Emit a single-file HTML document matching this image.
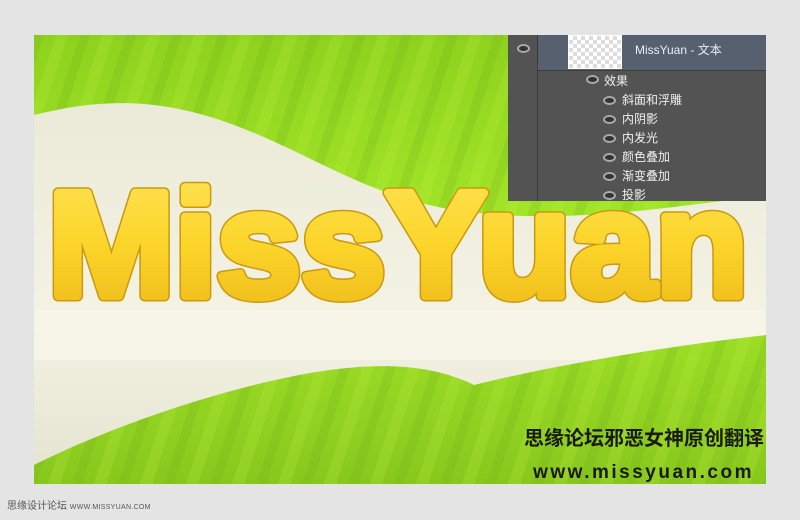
<!DOCTYPE html>
<html><head><meta charset="utf-8"><style>
html,body{margin:0;padding:0;width:800px;height:520px;background:#e5e4e4;overflow:hidden;font-family:"Liberation Sans","Noto Sans CJK SC",sans-serif}
.pic{position:absolute;left:34px;top:35px;width:732px;height:449px;overflow:hidden}
.panel{position:absolute;left:508px;top:35px;width:258px;height:166px;background:#535353;color:#f0f0f0;font-size:12px}
.panel .lc{position:absolute;left:29px;top:0;width:1px;height:166px;background:#3a3a3a}
.sel{position:absolute;left:30px;top:0;width:228px;height:35px;background:#56606e;border-bottom:1px solid #3e3e3e}
.thumb{position:absolute;left:60px;top:0;width:52px;height:32px;background:repeating-conic-gradient(#ddd 0 25%,#fff 0 50%) 0 0/8px 8px;border:1px solid #fff}
.eye{position:absolute;width:9px;height:5px;border-radius:50%;background:#333;border:2px solid #aaa}
.row{position:absolute;font-size:12px}
.foot{position:absolute;left:7px;top:497px;font-size:10px;color:#555}
.foot small{font-size:7px;letter-spacing:.3px}
</style></head><body>
<div class="pic">
<svg width="732" height="449" viewBox="0 0 732 449">
<defs>
<linearGradient id="g" x1="0" y1="0" x2="0" y2="1"><stop offset="0" stop-color="#8ed21e"/><stop offset=".5" stop-color="#a6e82a"/><stop offset="1" stop-color="#88c81e"/></linearGradient>
<pattern id="st" width="46" height="449" patternUnits="userSpaceOnUse" patternTransform="skewX(-18)"><rect x="0" width="10" height="449" fill="#6aa815" opacity=".18"/><rect x="22" width="12" height="449" fill="#c5f545" opacity=".18"/></pattern>
<linearGradient id="c" x1="0" y1="0" x2="0" y2="1"><stop offset="0" stop-color="#ebead8"/><stop offset=".6" stop-color="#f4f3e4"/><stop offset="1" stop-color="#e6e5d2"/></linearGradient>
<linearGradient id="y" x1="0" y1="0" x2="0" y2="1"><stop offset="0" stop-color="#ffe45a"/><stop offset=".5" stop-color="#fcd52a"/><stop offset="1" stop-color="#ecb718"/></linearGradient>
<clipPath id="cp"><path d="M0 80 C60 65,120 60,200 90 C280 120,330 160,420 175 C520 190,620 175,732 160 L732 300 C640 310,520 330,440 350 C380 320,300 330,220 350 C140 370,60 400,0 430 Z"/></clipPath>
</defs>
<rect width="732" height="449" fill="url(#g)"/>
<rect width="732" height="449" fill="url(#st)"/>
<path d="M0 80 C60 65,120 60,200 90 C280 120,330 160,420 175 C520 190,620 175,732 160 L732 300 C640 310,520 330,440 350 C380 320,300 330,220 350 C140 370,60 400,0 430 Z" fill="url(#c)"/>
<rect x="0" y="275" width="732" height="50" fill="#f8f7ea" opacity=".6" clip-path="url(#cp)"/>
<g font-family="Liberation Sans" font-weight="bold" font-size="150">
<text x="14" y="261" textLength="700" lengthAdjust="spacingAndGlyphs" fill="#c99a10" stroke="#c99a10" stroke-width="11" stroke-linejoin="round">MissYuan</text>
<text x="14" y="261" textLength="700" lengthAdjust="spacingAndGlyphs" fill="url(#y)" stroke="url(#y)" stroke-width="8" stroke-linejoin="round">MissYuan</text>
</g>
<text x="730" y="410" text-anchor="end" font-family="Noto Sans CJK SC" font-weight="bold" font-size="20" fill="#1a1a10">思缘论坛邪恶女神原创翻译</text>
<text x="720" y="443" text-anchor="end" font-family="Liberation Sans" font-weight="bold" font-size="19" letter-spacing="2.5" fill="#1a1a10">www.missyuan.com</text>
</svg>
</div>
<div class="panel"><div class="lc"></div><div class="sel"></div>
<div class="thumb"></div>
<div class="eye" style="left:9px;top:9px"></div>
<div class="row" style="left:127px;top:6px;color:#eaeef5">MissYuan - 文本</div>
<div class="eye" style="left:78px;top:40px"></div><div class="row" style="left:96px;top:37px">效果</div>
<div class="eye" style="left:95px;top:61px"></div><div class="row" style="left:114px;top:56px">斜面和浮雕</div>
<div class="eye" style="left:95px;top:80px"></div><div class="row" style="left:114px;top:75px">内阴影</div>
<div class="eye" style="left:95px;top:99px"></div><div class="row" style="left:114px;top:94px">内发光</div>
<div class="eye" style="left:95px;top:118px"></div><div class="row" style="left:114px;top:113px">颜色叠加</div>
<div class="eye" style="left:95px;top:137px"></div><div class="row" style="left:114px;top:132px">渐变叠加</div>
<div class="eye" style="left:95px;top:156px"></div><div class="row" style="left:114px;top:151px">投影</div>
</div>
<div class="foot">思缘设计论坛 <small>WWW.MISSYUAN.COM</small></div>
</body></html>
